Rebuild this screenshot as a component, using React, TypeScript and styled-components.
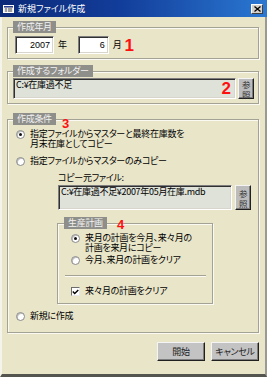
import React from 'react';
import styled, { createGlobalStyle } from 'styled-components';

const Global = createGlobalStyle`
  html, body { margin: 0; padding: 0; background: #e9e5c8; }
  body { font-family: "Noto Sans CJK JP", "Liberation Sans", sans-serif; }
`;

const Window = styled.div`
  width: 267px;
  height: 377px;
  display: flex;
  flex-direction: column;
  background: #e9e5c8;
  overflow: hidden;
  font-family: "Noto Sans CJK JP", "Liberation Sans", sans-serif;
  font-feature-settings: "palt";
  font-size: 9px;
  letter-spacing: -0.3px;
  color: #000;
`;

const TitleBar = styled.div`
  height: 17px;
  flex: none;
  display: flex;
  align-items: center;
  padding: 0 4px 0 3px;
  gap: 4px;
  background: linear-gradient(to right, #0b2a78 0%, #123d9a 45%, #2a78d2 100%);
  color: #fff;
`;

const TitleText = styled.span`
  font-size: 9px;
  line-height: 10px;
  letter-spacing: 0;
`;

const CloseBtn = styled.div`
  margin-left: auto;
  width: 12px;
  height: 10px;
  box-sizing: border-box;
  background: #d4d0c8;
  border: 1px solid;
  border-color: #fff #404040 #404040 #fff;
  display: flex;
  align-items: center;
  justify-content: center;
`;

const Body = styled.div`
  flex: 1;
  display: flex;
  flex-direction: column;
  padding: 4px 6px 0 5px;
  border-left: 2px solid #f5f4ea;
  border-right: 2px solid #9a9a92;
  border-bottom: 3px solid #55554f;
`;

const Group = styled.fieldset<{ $mt?: number; $w?: number }>`
  margin: ${p => p.$mt ?? 0}px 0 0 0;
  padding: 0;
  min-width: 0;
  ${p => (p.$w ? `width: ${p.$w}px; box-sizing: border-box;` : '')}
  border: 1px solid #a3a294;
  box-shadow: inset 1px 1px 0 #fbfaf2, 1px 1px 0 #fbfaf2;
`;

const Legend = styled.legend<{ $ml?: number }>`
  position: relative;
  margin-left: ${p => p.$ml ?? 5}px;
  padding: 0 4px;
  background: #8e8e8a;
  color: #f2f2f2;
  font-size: 9px;
  line-height: 12px;
  height: 12px;
`;

const Content = styled.div<{ $pad: string }>`
  padding: ${p => p.$pad};
  display: flex;
  flex-direction: column;
`;

const Row = styled.div<{ $gap?: number; $mt?: number }>`
  display: flex;
  align-items: center;
  gap: ${p => p.$gap ?? 0}px;
  margin-top: ${p => p.$mt ?? 0}px;
`;

const NumField = styled.div<{ $w: number; $ml?: number }>`
  width: ${p => p.$w}px;
  height: 18px;
  margin-left: ${p => p.$ml ?? 0}px;
  box-sizing: border-box;
  background: #fff;
  border: 1px solid;
  border-color: #7d7d7d #fff #fff #7d7d7d;
  box-shadow: inset 1px 1px 0 #303030, inset -1px -1px 0 #d8d6cc;
  font-family: "Liberation Sans", sans-serif;
  font-size: 9px;
  letter-spacing: 0;
  text-align: right;
  line-height: 14px;
  padding: 1px 3px 0 0;
`;

const Unit = styled.span<{ $ml: number }>`
  margin-left: ${p => p.$ml}px;
  line-height: 12px;
`;

const Mark = styled.span<{ $size?: number }>`
  color: #ff1010;
  font-family: "Liberation Sans", sans-serif;
  font-weight: bold;
  letter-spacing: 0;
  font-size: ${p => p.$size ?? 17}px;
  line-height: ${p => p.$size ?? 17}px;
`;

const OverMark = styled(Mark)<{ $top: number; $left?: number; $right?: number }>`
  position: absolute;
  top: ${p => p.$top}px;
  ${p => (p.$left !== undefined ? `left: ${p.$left}px;` : '')}
  ${p => (p.$right !== undefined ? `right: ${p.$right}px;` : '')}
`;

const PathField = styled.div<{ $w: number; $h: number }>`
  position: relative;
  width: ${p => p.$w}px;
  height: ${p => p.$h}px;
  box-sizing: border-box;
  background: #dee2d8;
  border: 1px solid;
  border-color: #7d7d7d #fff #fff #7d7d7d;
  box-shadow: inset 1px 1px 0 #303030, inset -1px -1px 0 #d8d6cc;
  padding: 1px 2px;
  line-height: 10px;
  white-space: nowrap;
  overflow: hidden;
`;

const RefBtn = styled.div<{ $h: number }>`
  width: 16px;
  height: ${p => p.$h}px;
  box-sizing: border-box;
  background: #bcbcbc;
  border: 1px solid;
  border-color: #f4f4f4 #202020 #202020 #f4f4f4;
  box-shadow: inset -1px -1px 0 #7a7a7a;
  display: flex;
  flex-direction: column;
  align-items: center;
  justify-content: center;
  line-height: 10px;
  font-size: 8.5px;
  color: #333;
`;

const Option = styled.div<{ $mt?: number }>`
  display: flex;
  align-items: flex-start;
  gap: 5px;
  margin-top: ${p => p.$mt ?? 0}px;
  line-height: 10px;
`;

const Radio = styled.span<{ $on?: boolean }>`
  flex: none;
  width: 9px;
  height: 9px;
  margin-top: 1px;
  box-sizing: border-box;
  border-radius: 50%;
  background: #fff;
  border: 1px solid #8a8a8a;
  box-shadow: inset 1px 1px 0 #bdbdbd;
  display: flex;
  align-items: center;
  justify-content: center;
  &::after {
    content: '';
    display: ${p => (p.$on ? 'block' : 'none')};
    width: 3px;
    height: 3px;
    border-radius: 50%;
    background: #111;
  }
`;

const Check = styled.span`
  flex: none;
  width: 9px;
  height: 9px;
  margin-top: 1px;
  box-sizing: border-box;
  background: #fff;
  border: 1px solid;
  border-color: #6d6d6d #e8e8e8 #e8e8e8 #6d6d6d;
  display: flex;
  align-items: center;
  justify-content: center;
`;

const Label = styled.div`
  line-height: 10px;
`;

const Indented = styled.div<{ $ml: number; $mt?: number }>`
  margin-left: ${p => p.$ml}px;
  margin-top: ${p => p.$mt ?? 0}px;
`;

const Separator = styled.div`
  margin: 10px 6px 0 7px;
  height: 1px;
  background: #a3a294;
  box-shadow: 0 1px 0 #fbfaf2;
`;

const ButtonRow = styled.div`
  display: flex;
  justify-content: flex-end;
  gap: 6px;
  margin-top: 9px;
`;

const PushBtn = styled.div`
  width: 48px;
  height: 19px;
  box-sizing: border-box;
  background: #c3c3c3;
  border: 1px solid;
  border-color: #f4f4f4 #202020 #202020 #f4f4f4;
  box-shadow: inset -1px -1px 0 #7d7d7d;
  display: flex;
  align-items: center;
  justify-content: center;
  font-size: 9px;
  color: #222;
`;

export default function App() {
  return (
    <>
      <Global />
      <Window>
        <TitleBar>
          <svg width="11" height="8" viewBox="0 0 11 8">
            <rect x="0.5" y="0.5" width="10" height="7" fill="#e8e8e8" stroke="#fff" />
            <rect x="1" y="1" width="9" height="1.5" fill="#2a3e8a" />
            <rect x="2" y="3.5" width="2" height="1" fill="#555" />
            <rect x="5" y="3.5" width="4" height="1" fill="#555" />
            <rect x="2" y="5.5" width="2" height="1" fill="#555" />
            <rect x="5" y="5.5" width="4" height="1" fill="#555" />
          </svg>
          <TitleText>新規ファイル作成</TitleText>
          <CloseBtn>
            <svg width="7" height="6" viewBox="0 0 7 6">
              <path d="M0.5 0.5 L6.5 5.5 M6.5 0.5 L0.5 5.5" stroke="#000" strokeWidth="1.3" />
            </svg>
          </CloseBtn>
        </TitleBar>
        <Body>
          <Group>
            <Legend>作成年月</Legend>
            <Content $pad="3px 0 4px 7px">
              <Row>
                <NumField $w={39}>2007</NumField>
                <Unit $ml={4}>年</Unit>
                <NumField $w={31} $ml={11}>6</NumField>
                <Unit $ml={4}>月</Unit>
                <Mark style={{ marginLeft: 3 }}>1</Mark>
              </Row>
            </Content>
          </Group>

          <Group $mt={6}>
            <Legend>作成するフォルダー</Legend>
            <Content $pad="1px 4px 4px 5px">
              <Row $gap={2}>
                <PathField $w={223} $h={21}>
                  C:¥在庫過不足
                  <OverMark $top={1} $right={4}>2</OverMark>
                </PathField>
                <RefBtn $h={21}>
                  <span>参</span>
                  <span>照</span>
                </RefBtn>
              </Row>
            </Content>
          </Group>

          <Group $mt={9}>
            <Legend>
              作成条件
              <OverMark $size={13} $top={4} $left={49}>3</OverMark>
            </Legend>
            <Content $pad="4px 0 11px 8px">
              <Option>
                <Radio $on />
                <Label>
                  指定ファイルからマスターと最終在庫数を
                  <br />
                  月末在庫としてコピー
                </Label>
              </Option>
              <Option $mt={7}>
                <Radio />
                <Label>指定ファイルからマスターのみコピー</Label>
              </Option>
              <Indented $ml={42} $mt={7}>
                <Label>コピー元ファイル:</Label>
                <Row $gap={3} $mt={2}>
                  <PathField $w={174} $h={25}>C:¥在庫過不足¥2007年05月在庫.mdb</PathField>
                  <RefBtn $h={25}>
                    <span>参</span>
                    <span>照</span>
                  </RefBtn>
                </Row>
              </Indented>
              <Indented $ml={41} $mt={7}>
                <Group $w={156}>
                  <Legend $ml={6}>
                    生産計画
                    <OverMark $size={13} $top={1} $left={53}>4</OverMark>
                  </Legend>
                  <Content $pad="4px 0 0 13px">
                    <Option>
                      <Radio $on />
                      <Label>
                        来月の計画を今月、来々月の
                        <br />
                        計画を来月にコピー
                      </Label>
                    </Option>
                    <Option $mt={2}>
                      <Radio />
                      <Label>今月、来月の計画をクリア</Label>
                    </Option>
                  </Content>
                  <Separator />
                  <Content $pad="10px 0 7px 13px">
                    <Option>
                      <Check>
                        <svg width="7" height="6" viewBox="0 0 7 6">
                          <path d="M0.8 2.6 L2.7 4.6 L6.3 0.9" stroke="#000" strokeWidth="1.4" fill="none" />
                        </svg>
                      </Check>
                      <Label>来々月の計画をクリア</Label>
                    </Option>
                  </Content>
                </Group>
              </Indented>
              <Option $mt={7}>
                <Radio />
                <Label>新規に作成</Label>
              </Option>
            </Content>
          </Group>

          <ButtonRow>
            <PushBtn>開始</PushBtn>
            <PushBtn>キャンセル</PushBtn>
          </ButtonRow>
        </Body>
      </Window>
    </>
  );
}
